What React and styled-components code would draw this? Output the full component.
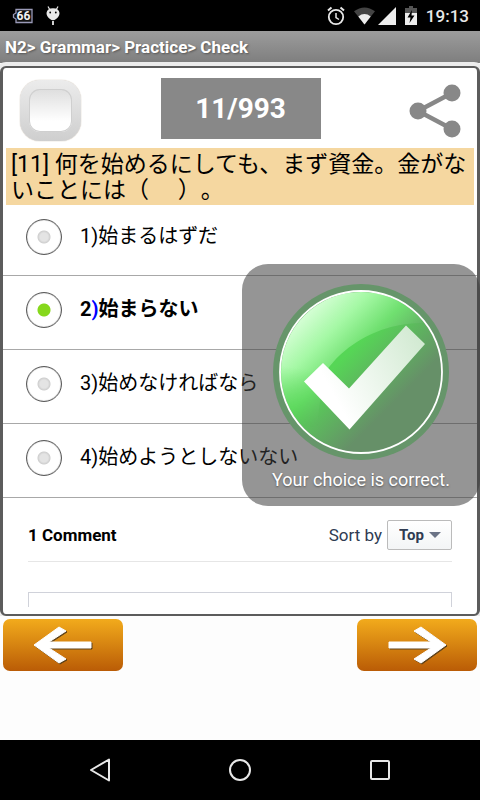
import { useState } from 'react';
import styled, { createGlobalStyle } from 'styled-components';

const question = '[11] 何を始めるにしても、まず資金。金がないことには（\u3000\u00a0）。';
const options = ['始まるはずだ', '始まらない', '始めなければなら', '始めようとしないない'];

export default function App(){
    const [choice, setChoice] = useState(1);
    const [sort, setSort] = useState('Top');
    const [marked, setMarked] = useState(false);

    return(
        <Screen>
            <GlobalStyle />
            <StatusBar>
                <StatusGroup $gap = "13px">
                    <BatteryLevelIcon />
                    <DroidIcon />
                </StatusGroup>
                <StatusGroup $gap = "9px">
                    <AlarmIcon />
                    <StatusGroup $gap = "3px">
                        <WifiIcon />
                        <SignalIcon />
                    </StatusGroup>
                    <ChargingIcon />
                    <Clock>19:13</Clock>
                </StatusGroup>
            </StatusBar>
            <TitleBar>N2&gt; Grammar&gt; Practice&gt; Check</TitleBar>

            <Card>
                <Tools>
                    <ToolSide>
                        <MarkBox
                            type = "checkbox"
                            aria-label = "Mark question"
                            checked = {marked}
                            onChange = {e => setMarked(e.target.checked)}
                        />
                    </ToolSide>
                    <Counter>11/993</Counter>
                    <ToolSide $end>
                        <ShareButton aria-label = "Share"><ShareIcon /></ShareButton>
                    </ToolSide>
                </Tools>

                <Question>{question}</Question>

                <Answers>
                    {options.map((text, i) => (
                        <Answer key = {text} $chosen = {choice === i}>
                            <Radio
                                type = "radio"
                                name = "answer"
                                checked = {choice === i}
                                onChange = {() => setChoice(i)}
                            />
                            <span>{i + 1}<b>)</b>{text}</span>
                        </Answer>
                    ))}
                    {choice === 1 && (
                        <Toast role = "status">
                            <CorrectIcon />
                            <p>Your choice is correct.</p>
                        </Toast>
                    )}
                </Answers>

                <Comments>
                    <CommentsHead>
                        <h2>1 Comment</h2>
                        <SortBox>
                            <label htmlFor = "sort">Sort by</label>
                            <SelectBox>
                                <select id = "sort" value = {sort} onChange = {e => setSort(e.target.value)}>
                                    <option>Top</option>
                                    <option>Newest</option>
                                    <option>Oldest</option>
                                </select>
                            </SelectBox>
                        </SortBox>
                    </CommentsHead>
                    <CommentInput aria-label = "Add a comment" />
                </Comments>
            </Card>

            <Pager>
                <PageButton aria-label = "Previous"><ArrowIcon /></PageButton>
                <PageButton aria-label = "Next"><ArrowIcon right /></PageButton>
            </Pager>

            <SystemBar>
                <SystemButton aria-label = "Back">
                    <svg width="24" height="26"><path d="M21 2.500V23.500L3 13Z" /></svg>
                </SystemButton>
                <SystemButton aria-label = "Home">
                    <svg width="24" height="26"><circle cx="12" cy="13" r="10" /></svg>
                </SystemButton>
                <SystemButton aria-label = "Recent apps">
                    <svg width="24" height="26"><rect x="3" y="4" width="18" height="18" rx="1" /></svg>
                </SystemButton>
            </SystemBar>
        </Screen>
    );
}

function BatteryLevelIcon(){
    return(
        <svg width="21" height="16" viewBox="0 0 21 16">
            <path d="M4 1.500H20V14.500H4V11L1.500 9.500V6.500L4 5Z" fill="#111" stroke="#9a9ab8" strokeWidth="1.300" />
            <text x="11.500" y="12.200" fill="#f2f2f2" fontFamily="Roboto, sans-serif" fontSize="12" fontWeight="700" textAnchor="middle">66</text>
        </svg>
    );
}

function DroidIcon(){
    return(
        <svg width="14" height="20" viewBox="0 0 14 20">
            <path d="M2 0.500L4 4M12 0.500L10 4" stroke="#e8e8e8" strokeWidth="1.200" />
            <path d="M0.500 7Q1 2.200 7 2.200T13.500 7Q13.500 10.500 10 13Q7 15.500 4 13Q0.500 10.500 0.500 7Z" fill="#e8e8e8" />
            <circle cx="4.200" cy="6.500" r="0.900" />
            <circle cx="9.800" cy="6.500" r="0.900" />
            <path d="M7 15V19" stroke="#e8e8e8" strokeWidth="1.800" />
        </svg>
    );
}

function AlarmIcon(){
    return(
        <svg width="18" height="20" viewBox="0 0 18 20" fill="none" stroke="#e8e8e8">
            <circle cx="9" cy="11" r="7.200" strokeWidth="1.800" />
            <path d="M1 4.500L4.500 1.500M17 4.500L13.500 1.500" strokeWidth="2" />
            <path d="M9 7V11.500L12 13.500" strokeWidth="1.500" />
        </svg>
    );
}

function WifiIcon(){
    return(
        <svg width="21" height="18" viewBox="0 0 22 18">
            <path d="M0 4Q11 -4 22 4L11 18Z" fill="#444" />
            <path d="M4.500 9.500Q11 4.500 17.500 9.500L11 18Z" fill="#ededed" />
        </svg>
    );
}

function SignalIcon(){
    return <svg width="18" height="18"><path d="M18 0V18H0Z" fill="#ededed" /></svg>;
}

function ChargingIcon(){
    return(
        <svg width="12" height="19" viewBox="0 0 12 19">
            <path d="M4 0H8V2H12V7H0V2H4Z" fill="#555" />
            <path d="M0 7H12V19H0Z" fill="#ededed" />
            <path d="M7 4L2.500 11.500H5.500L4.500 17L9.500 9.500H6.500Z" fill="#000" />
        </svg>
    );
}

function ShareIcon(){
    return(
        <svg width="52" height="56" viewBox="0 0 52 56" fill="#888">
            <path d="M43 10L9 28L43 46" fill="none" stroke="#888" strokeWidth="4.500" />
            <circle cx="43" cy="10" r="8.500" />
            <circle cx="9" cy="28" r="8.500" />
            <circle cx="43" cy="46" r="8.500" />
        </svg>
    );
}

function CorrectIcon(){
    return(
        <svg width="176" height="176" viewBox="0 0 176 176">
            <defs>
                <clipPath id="inside"><circle cx="88" cy="88" r="80" /></clipPath>
                <linearGradient id="disc" gradientUnits="userSpaceOnUse" x1="72" y1="72" x2="120" y2="120">
                    <stop offset="0" stopColor="#56d656" />
                    <stop offset="1" stopColor="#669068" />
                </linearGradient>
                <linearGradient id="shine" gradientUnits="userSpaceOnUse" x1="28" y1="28" x2="100" y2="100">
                    <stop offset="0" stopColor="#dcffdc" />
                    <stop offset="0.350" stopColor="#a4f8a4" />
                    <stop offset="0.650" stopColor="#70e070" />
                    <stop offset="1" stopColor="#60a862" />
                </linearGradient>
                <linearGradient id="tick" gradientUnits="userSpaceOnUse" x1="60" y1="110" x2="150" y2="60">
                    <stop offset="0" stopColor="#fff" />
                    <stop offset="1" stopColor="#d2ead2" />
                </linearGradient>
                <linearGradient id="fade" gradientUnits="userSpaceOnUse" x1="40" y1="86" x2="32" y2="142">
                    <stop offset="0" stopColor="#fff" />
                    <stop offset="1" stopColor="#000" />
                </linearGradient>
                <mask id="soft"><rect width="176" height="176" fill="url(#fade)" /></mask>
            </defs>
            <circle cx="88" cy="88" r="88" fill="#66956a" />
            <g clipPath="url(#inside)">
                <rect width="176" height="176" fill="url(#disc)" />
                <path d="M0 0H176V42C158 38 138 38 118 43C92 50 66 66 50 92L40 176H0Z" fill="url(#shine)" mask="url(#soft)" />
            </g>
            <circle cx="88" cy="88" r="81" fill="none" stroke="#fff" strokeWidth="1.800" />
            <path d="M31 97.500L50 79L76 104.500L133 41.500L152 60L76.500 145.500Z" fill="url(#tick)" />
        </svg>
    );
}

function ArrowIcon({ right }){
    const d = right
        ? 'M60 22L35 4L28 8L45 19H3V25H45L28 36L35 40Z'
        : 'M2 22L27 4L34 8L17 19H59V25H17L34 36L27 40Z';
    return(
        <svg width="62" height="44" viewBox="0 0 62 44" strokeWidth="1" strokeLinejoin="round">
            <path d={d} fill="#5f431c" stroke="#5f431c" transform="translate(1 1)" />
            <path d={d} fill="#fff" stroke="#fff" />
        </svg>
    );
}

const GlobalStyle = createGlobalStyle`
    * {
        box-sizing: border-box;
    }
    body {
        margin: 0;
        background: #fdfdfd;
        font-family: Roboto, "Noto Sans CJK JP", sans-serif;
        color: #000;
    }
    button {
        border: none;
        padding: 0;
        background: none;
    }
    svg {
        display: block;
    }
`;

const Screen = styled.div`
    min-height: 100vh;
    display: flex;
    flex-direction: column;
`;

const StatusBar = styled.header`
    height: 31px;
    padding: 0 11px 0 12px;
    display: flex;
    justify-content: space-between;
    align-items: center;
    background: #000;
`;

const StatusGroup = styled.div`
    display: flex;
    align-items: center;
    gap: ${props => props.$gap};
`;

const Clock = styled.time`
    font-weight: 500;
    font-size: 17px;
    line-height: 24px;
    color: #e8e8e8;
`;

const TitleBar = styled.h1`
    margin: 0;
    padding: 0 5px;
    background: linear-gradient(#9c9c9c, #7e7e7e);
    font-weight: 700;
    font-size: 17px;
    line-height: 32px;
    color: #fff;
    text-shadow: 1px 1px 2px #555;
`;

const Card = styled.main`
    margin-top: 3px;
    border: solid #5c5c5c;
    border-width: 2px 3px;
    border-radius: 6px;
    background: #fff;
    box-shadow: 0 0 0 4px #ececec;
    clip-path: inset(-4px 0 0 0);
`;

const Tools = styled.div`
    padding: 10px 16px 7px 17px;
    display: flex;
`;

const ToolSide = styled.div`
    flex: 1;
    padding-top: 2px;
    display: flex;
    align-items: center;
    justify-content: ${props => props.$end ? 'flex-end' : 'flex-start'};
`;

const MarkBox = styled.input`
    appearance: none;
    width: 61px;
    height: 61px;
    margin: 0;
    border: 9px solid transparent;
    border-radius: 20px;
    background:
        linear-gradient(#dedede, #fff 75%) padding-box,
        linear-gradient(#ececec, #cecece) border-box;
    box-shadow: inset 0 0 0 1px #cfcfcf, 0 0 1px #a08c74;
    &:checked {
        background:
            linear-gradient(#8fdc1e, #8fdc1e) padding-box,
            linear-gradient(#ececec, #cecece) border-box;
    }
`;

const Counter = styled.div`
    width: 160px;
    height: 61px;
    background: #888;
    font-weight: 700;
    font-size: 28px;
    line-height: 62px;
    text-align: center;
    color: #fff;
`;

const ShareButton = styled.button`
    display: flex;
`;

const Question = styled.p`
    margin: 0 3px;
    padding: 4px 2px 1px 5px;
    background: #f5d7a0;
    font-size: 23px;
    line-height: 26px;
    text-spacing-trim: space-all;
`;

const Answers = styled.div`
    position: relative;
`;

const Answer = styled.label`
    height: 74px;
    padding: 0 23px 6px;
    display: flex;
    align-items: center;
    gap: 18px;
    border-bottom: 1px solid #a8a8a8;
    font-size: 20px;
    font-weight: ${props => props.$chosen ? 700 : 400};
    &:first-child {
        height: 71px;
    }
    span {
        padding-bottom: 2px;
        line-height: 30px;
    }
    b {
        font-weight: inherit;
        color: ${props => props.$chosen ? '#00f' : 'inherit'};
    }
`;

const Radio = styled.input`
    appearance: none;
    width: 36px;
    height: 36px;
    margin: 0;
    border: 1px solid #5a5a5a;
    border-radius: 50%;
    background: radial-gradient(circle, #e4e4e4 4px, #cfcfcf 6px, #fff 7px);
    box-shadow: inset 0 0 1px #444;
    &:checked {
        background: radial-gradient(circle, #86d81c 6px, #fff 7px);
    }
`;

const Toast = styled.div`
    position: absolute;
    top: 59px;
    right: -3px;
    width: 238px;
    height: 242px;
    padding-top: 20px;
    display: flex;
    flex-direction: column;
    align-items: center;
    border-radius: 26px;
    background: rgba(62, 62, 62, 0.55);
    p {
        margin: 8px 0 0;
        font-size: 18px;
        line-height: 24px;
        color: #fff;
        text-shadow: 0 1px 2px #555;
    }
`;

const Comments = styled.section`
    padding: 22px 25px 7px;
`;

const CommentsHead = styled.div`
    padding-bottom: 11px;
    margin-bottom: 30px;
    display: flex;
    justify-content: space-between;
    align-items: center;
    border-bottom: 1px solid #e6e6e6;
    font-size: 17px;
    h2 {
        margin: 0;
        font-size: 17px;
        font-weight: 700;
    }
`;

const SortBox = styled.div`
    display: flex;
    align-items: center;
    gap: 5px;
    color: #2f3b52;
`;

const SelectBox = styled.div`
    position: relative;
    select {
        appearance: none;
        width: 65px;
        height: 30px;
        padding: 0 11px;
        border: 1px solid #bbb;
        border-radius: 2px;
        background: linear-gradient(#fff, #f3f5f6);
        font-family: inherit;
        font-weight: 700;
        font-size: 15px;
        color: #2f3b52;
    }
    &::after {
        content: '';
        position: absolute;
        top: 12px;
        right: 11px;
        border: 6px solid transparent;
        border-top-color: #6b7386;
        border-bottom: none;
        pointer-events: none;
    }
`;

const CommentInput = styled.textarea`
    display: block;
    width: 100%;
    height: 15px;
    border: 1px solid #d0d2da;
    border-bottom: none;
    resize: none;
`;

const Pager = styled.nav`
    flex: 1;
    padding: 3px;
    display: flex;
    justify-content: space-between;
    align-items: flex-start;
`;

const PageButton = styled.button`
    width: 120px;
    height: 52px;
    display: flex;
    justify-content: center;
    align-items: center;
    border-radius: 7px;
    background: linear-gradient(#f2ab1c, #ba5c06);
`;

const SystemBar = styled.footer`
    height: 60px;
    padding: 0 30px;
    display: flex;
    background: #000;
`;

const SystemButton = styled.button`
    flex: 1;
    display: flex;
    justify-content: center;
    align-items: center;
    svg {
        fill: none;
        stroke: #e8e8e8;
        stroke-width: 2;
        stroke-linejoin: round;
    }
`;
